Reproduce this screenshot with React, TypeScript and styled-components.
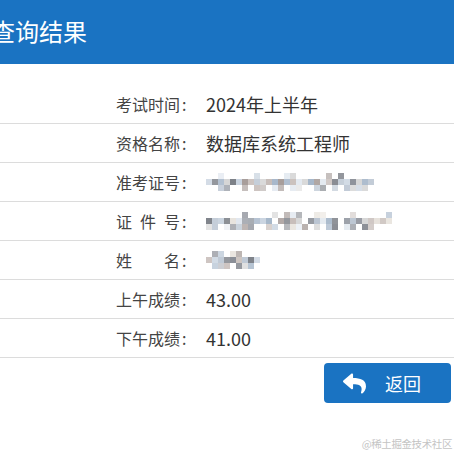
import styled, { createGlobalStyle } from 'styled-components';
import { FaReply } from 'react-icons/fa';

const GlobalStyle = createGlobalStyle`
  html, body {
    margin: 0;
    padding: 0;
    background: #fff;
  }
  body {
    font-family: 'Noto Sans CJK SC', 'Noto Sans', sans-serif;
    color: #333;
  }
`;

const Page = styled.div`
  position: relative;
  width: 454px;
  height: 454px;
  overflow: hidden;
`;

const Header = styled.div`
  height: 64px;
  background: #1a73c2;
  display: flex;
  align-items: center;
`;

const Title = styled.h1`
  margin: -3px 0 0 -9px;
  font-size: 24px;
  font-weight: normal;
  color: #fff;
  line-height: 1;
`;

const Table = styled.div`
  margin-top: 21px;
  display: flex;
  flex-direction: column;
`;

const Row = styled.div`
  display: grid;
  grid-template-columns: 206px 1fr;
  align-items: center;
  height: 38px;
  border-bottom: 1px solid #dcdcdc;
`;

const Label = styled.div`
  display: flex;
  align-items: center;
  padding-left: 116px;
  font-size: 16px;
  color: #444;
`;

const LabelText = styled.span`
  display: inline-block;
  width: 64px;
  text-align: justify;
  text-align-last: justify;
`;

const Colon = styled.span`
  margin-left: 2px;
`;

const Value = styled.div`
  font-size: 18px;
  color: #333;
  display: flex;
  align-items: center;
`;

const Footer = styled.div`
  display: flex;
  justify-content: flex-end;
  padding: 5px 3px 0 0;
`;

const BackButton = styled.button`
  width: 127px;
  height: 40px;
  border: none;
  border-radius: 4px;
  background: #1a73c2;
  color: #fff;
  display: flex;
  align-items: center;
  padding: 0 0 0 19px;
  gap: 19px;
  font-family: 'Noto Sans CJK SC', sans-serif;
  font-size: 18px;
  cursor: pointer;
`;

const Watermark = styled.div`
  position: absolute;
  right: 2px;
  bottom: 3px;
  font-size: 10.5px;
  color: #c4c4c4;
  letter-spacing: -0.4px;
`;

const palette = [
  '#9a9fa8', '#b9c4d1', '#cad4e0', '#a89e9b', '#d6d6d6',
  '#858992', '#e6e1da', '#a5b6c9', '#7c8087', '#c6bcb8', '#dfe6ee',
];

function Mosaic({ width, seed }: { width: number; seed: number }) {
  const cell = 6;
  const cols = Math.floor(width / cell);
  let s = seed;
  const rand = () => {
    s = (s * 1103515245 + 12345) % 2147483648;
    return s / 2147483648;
  };
  const chances = [0.3, 0.92, 0.6];
  const rects = [];
  for (let c = 0; c < cols; c++) {
    for (let r = 0; r < 3; r++) {
      if (rand() < chances[r]) {
        const color = palette[Math.floor(rand() * palette.length)];
        rects.push(
          <rect
            key={`${c}-${r}`}
            x={c * cell}
            y={r * cell}
            width={cell}
            height={cell}
            fill={color}
            opacity={r === 1 ? 0.8 + rand() * 0.2 : 0.5 + rand() * 0.4}
          />
        );
      }
    }
  }
  return (
    <svg width={cols * cell} height={18} viewBox={`0 0 ${cols * cell} 18`}>
      {rects}
    </svg>
  );
}

const rows: { label: string; value: React.ReactNode }[] = [
  { label: '考试时间', value: '2024年上半年' },
  { label: '资格名称', value: '数据库系统工程师' },
  { label: '准考证号', value: <Mosaic width={172} seed={17} /> },
  { label: '证件号', value: <Mosaic width={186} seed={91} /> },
  { label: '姓名', value: <Mosaic width={54} seed={5} /> },
  { label: '上午成绩', value: '43.00' },
  { label: '下午成绩', value: '41.00' },
];

export default function App() {
  return (
    <Page>
      <GlobalStyle />
      <Header>
        <Title>查询结果</Title>
      </Header>
      <Table>
        {rows.map((row) => (
          <Row key={row.label}>
            <Label>
              <LabelText>{row.label}</LabelText>
              <Colon>:</Colon>
            </Label>
            <Value>{row.value}</Value>
          </Row>
        ))}
      </Table>
      <Footer>
        <BackButton>
          <FaReply size={23} />
          <span>返回</span>
        </BackButton>
      </Footer>
      <Watermark>@稀土掘金技术社区</Watermark>
    </Page>
  );
}
